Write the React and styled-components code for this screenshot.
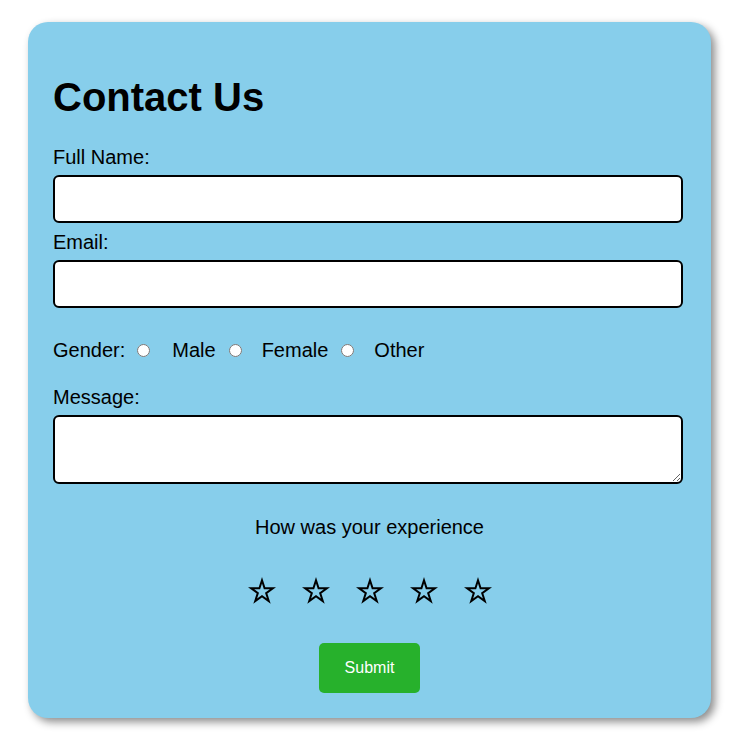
import React from "react";
import styled, { createGlobalStyle } from "styled-components";

const GlobalStyle = createGlobalStyle`
  body {
    margin: 0;
    background: #ffffff;
    font-family: "Liberation Sans", Arial, sans-serif;
  }
`;

const Page = styled.div`
  padding: 22px 0 26px 28px;
`;

const Card = styled.form`
  width: 683px;
  box-sizing: border-box;
  padding: 25px;
  background-color: #87ceeb;
  border-radius: 20px;
  box-shadow: 4px 4px 8px rgba(0, 0, 0, 0.45);
  font-size: 20px;
  color: #000;
`;

const Title = styled.h1`
  margin: 28px 0 26px;
  font-size: 40px;
  font-weight: bold;
  color: #000;
`;

const Label = styled.label`
  display: block;
  line-height: 23px;
`;

const TextInput = styled.input`
  display: block;
  width: 630px;
  height: 48px;
  box-sizing: border-box;
  margin: 6px 0 8px;
  border: 2px solid #000;
  border-radius: 6px;
  background: #fff;
  outline: none;
`;

const GenderRow = styled.div`
  display: flex;
  align-items: center;
  margin-top: 31px;
  line-height: 23px;
`;

const Radio = styled.input`
  margin: 0 ${(p) => (p.$first ? "22px 0 12px" : "20px 0 13px")};
  width: 13px;
  height: 13px;
`;

const MessageLabel = styled(Label)`
  margin-top: 24px;
`;

const TextArea = styled.textarea`
  display: block;
  width: 630px;
  height: 69px;
  box-sizing: border-box;
  margin-top: 6px;
  border: 2px solid #000;
  border-radius: 6px;
  background: #fff;
  outline: none;
`;

const Question = styled.p`
  margin: 32px 0 0;
  text-align: center;
  line-height: 23px;
`;

const Stars = styled.div`
  display: flex;
  justify-content: center;
  gap: 26px;
  margin-top: 38px;
`;

const StarButton = styled.svg`
  display: block;
  width: 28px;
  height: 27px;
  cursor: pointer;
`;

const Actions = styled.div`
  display: flex;
  justify-content: center;
  margin-top: 39px;
`;

const SubmitButton = styled.button`
  width: 101px;
  height: 50px;
  border: 0;
  border-radius: 5px;
  background-color: #27b12c;
  color: #fff;
  font-family: "Liberation Sans", Arial, sans-serif;
  font-size: 16px;
  cursor: pointer;
`;

const STAR_POINTS =
  "14,3.24 16.58,11.19 24.94,11.19 18.17,16.1 20.76,24.04 14,19.13 7.24,24.04 9.83,16.1 3.06,11.19 11.42,11.19";

function Star({ filled, onClick }) {
  return (
    <StarButton viewBox="0 0 28 27" onClick={onClick}>
      <polygon
        points={STAR_POINTS}
        fill={filled ? "#000" : "none"}
        stroke="#000"
        strokeWidth="2"
      />
    </StarButton>
  );
}

export default function App() {
  const [rating, setRating] = React.useState(0);

  return (
    <Page>
      <GlobalStyle />
      <Card onSubmit={(e) => e.preventDefault()}>
        <Title>Contact Us</Title>
        <Label htmlFor="name">Full Name:</Label>
        <TextInput id="name" type="text" />
        <Label htmlFor="email">Email:</Label>
        <TextInput id="email" type="email" />
        <GenderRow>
          Gender:
          <Radio $first type="radio" name="gender" id="male" />
          <label htmlFor="male">Male</label>
          <Radio type="radio" name="gender" id="female" />
          <label htmlFor="female">Female</label>
          <Radio type="radio" name="gender" id="other" />
          <label htmlFor="other">Other</label>
        </GenderRow>
        <MessageLabel htmlFor="message">Message:</MessageLabel>
        <TextArea id="message" />
        <Question>How was your experience</Question>
        <Stars>
          {[1, 2, 3, 4, 5].map((n) => (
            <Star key={n} filled={n <= rating} onClick={() => setRating(n)} />
          ))}
        </Stars>
        <Actions>
          <SubmitButton type="submit">Submit</SubmitButton>
        </Actions>
      </Card>
    </Page>
  );
}
